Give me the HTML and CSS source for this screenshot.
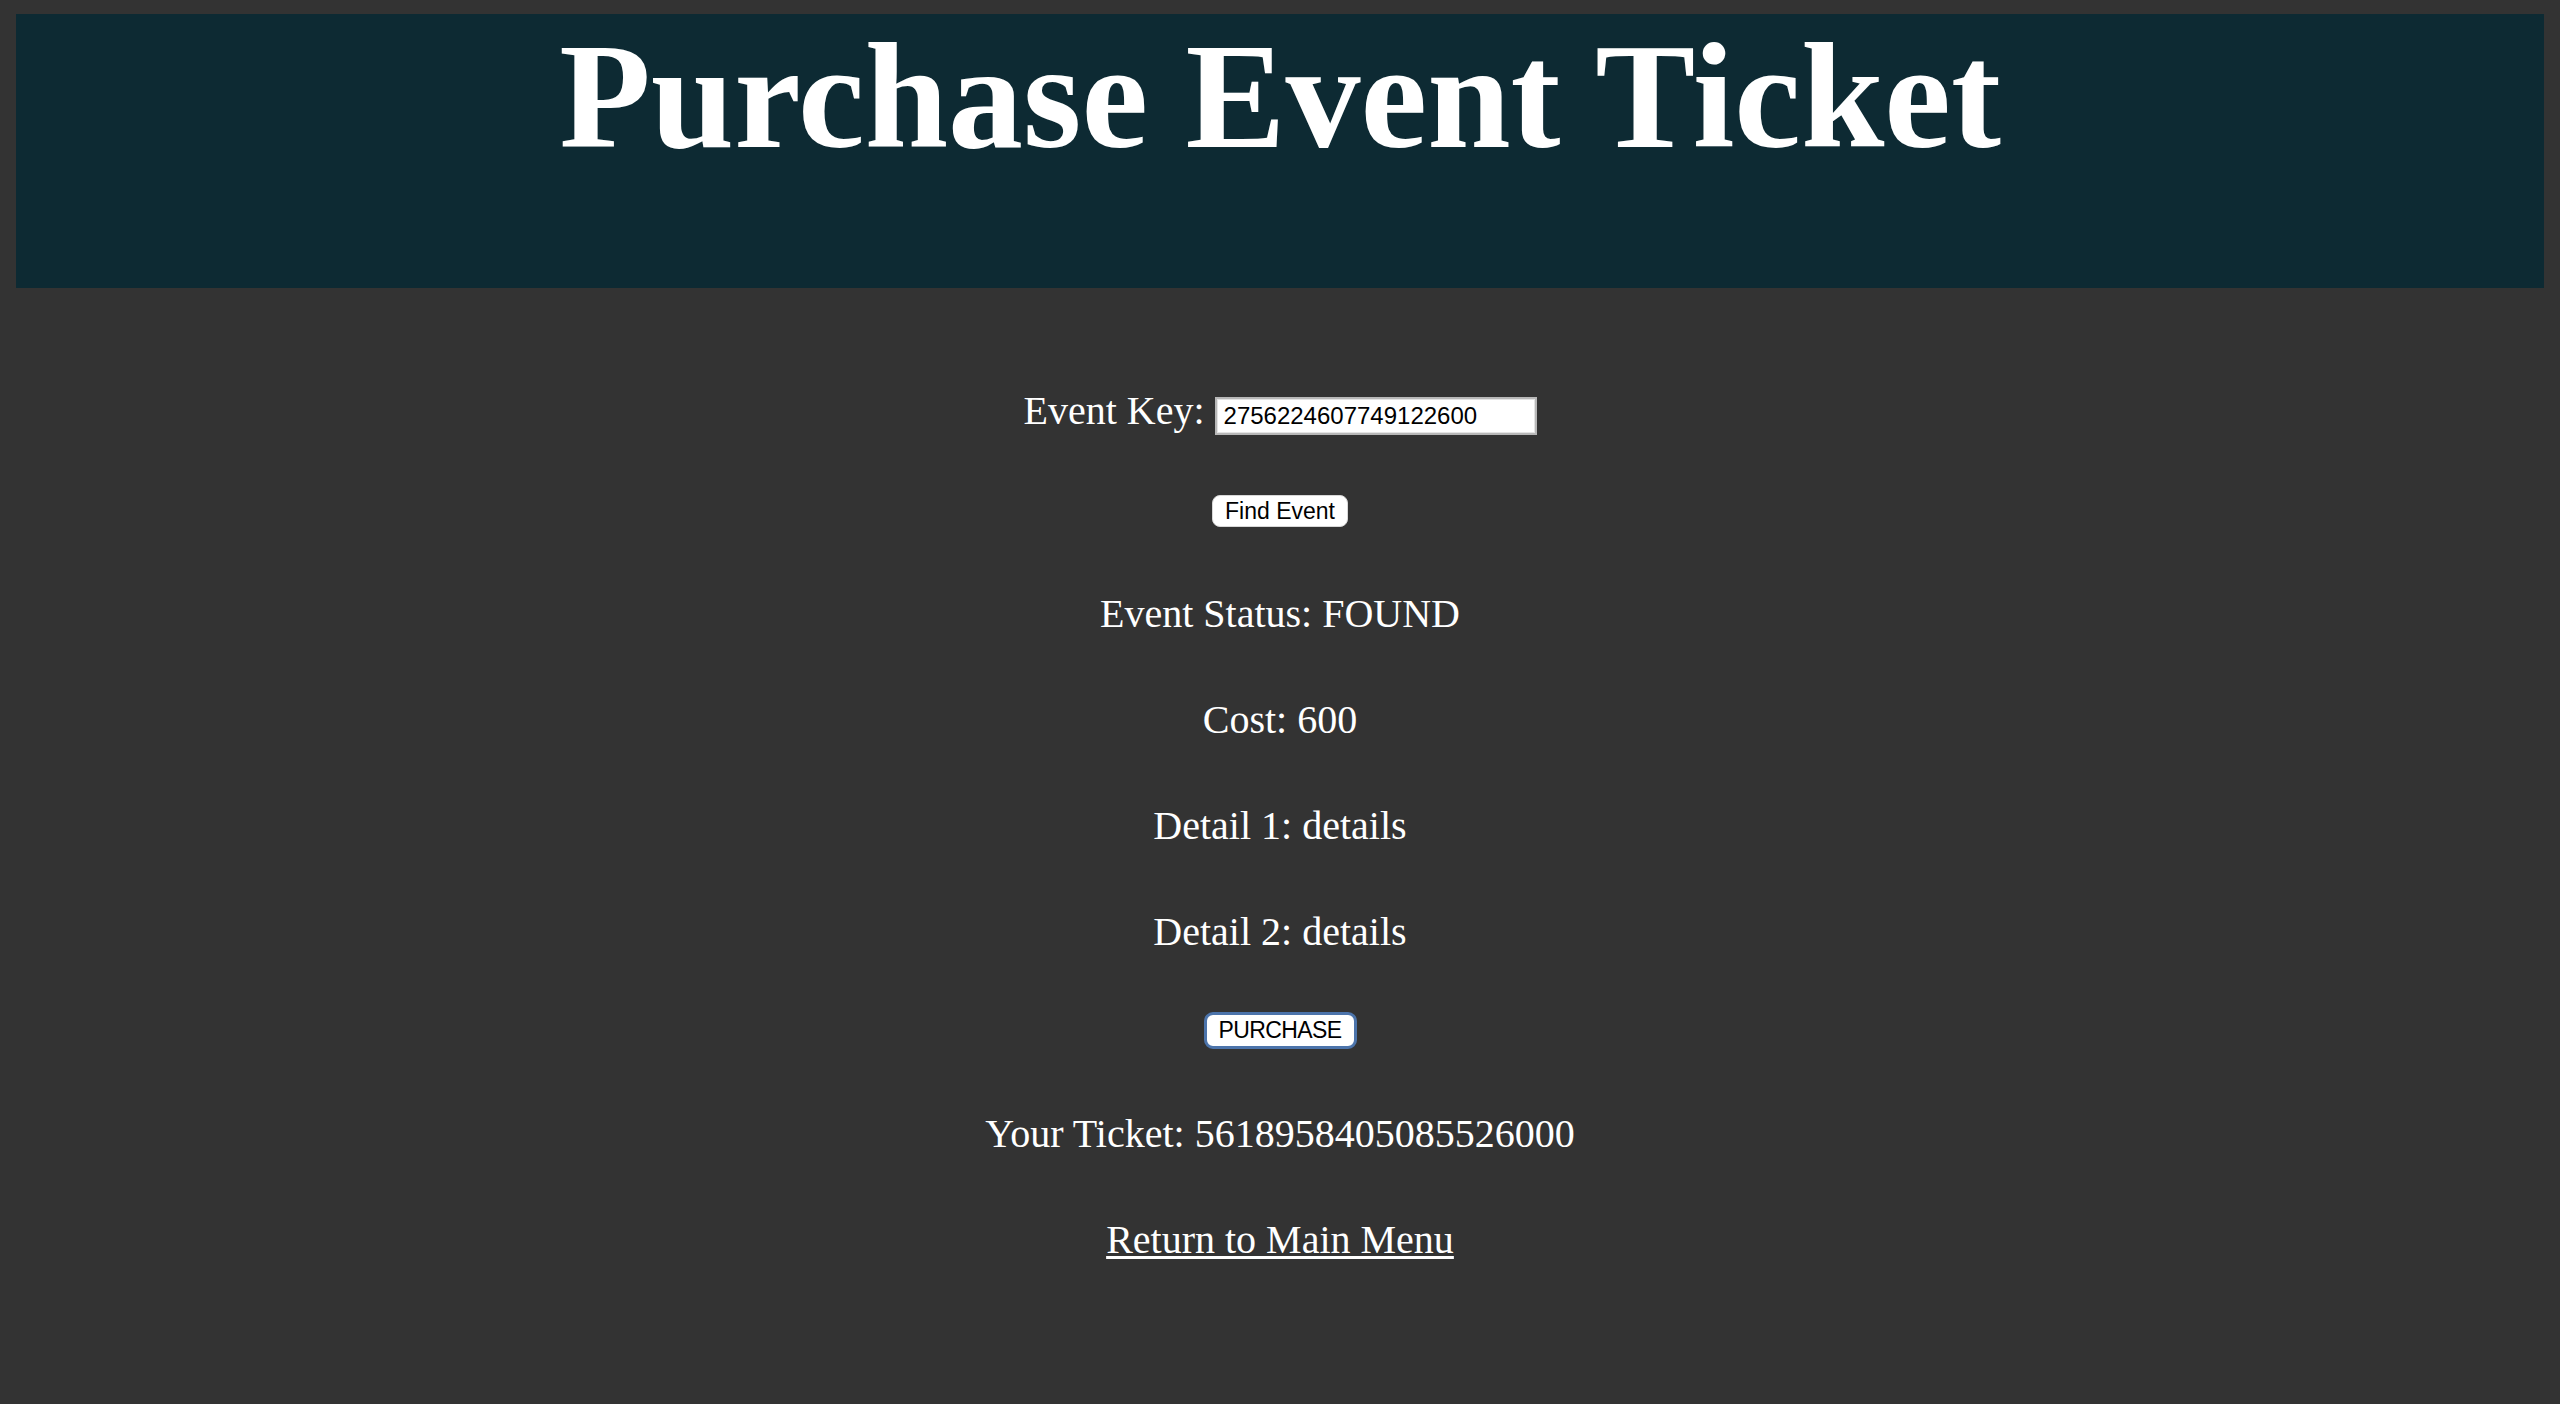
FILE: index.html
```html
<!DOCTYPE html>
<html lang="en">
<head>
<meta charset="utf-8">
<title>Purchase Event Ticket</title>
<link rel="stylesheet" href="styles.css">
</head>
<body>
<div class="header">
  <h1 class="title">Purchase Event Ticket</h1>
</div>
<div class="content">
  <div class="row row-key">Event Key: <input class="key-input" type="text" value="2756224607749122600"></div>
  <button class="btn btn-find" type="button">Find Event</button>
  <div class="row row-status">Event Status: FOUND</div>
  <div class="row">Cost: 600</div>
  <div class="row">Detail 1: details</div>
  <div class="row">Detail 2: details</div>
  <button class="btn btn-purchase" type="button">PURCHASE</button>
  <div class="row row-ticket">Your Ticket: 5618958405085526000</div>
  <div class="row"><a class="menu-link" href="#">Return to Main Menu</a></div>
</div>
</body>
</html>
```
FILE: styles.css
```css
html, body {
  background: #333333;
}
body {
  margin: 14px 16px 0 16px;
  font-family: "Liberation Serif", "Times New Roman", serif;
  color: #ffffff;
}
.header {
  background: #0d2a33;
  height: 274px;
  text-align: center;
}
.title {
  margin: 0;
  font-size: 150px;
  font-weight: bold;
  line-height: 164px;
  color: #ffffff;
}
.content {
  display: flex;
  flex-direction: column;
  align-items: center;
  padding-top: 100px;
}
.row {
  font-size: 40px;
  line-height: 46px;
  height: 46px;
  margin-top: 60px;
  white-space: nowrap;
}
.row-key {
  margin-top: 0;
}
.row-status {
  margin-top: 64px;
}
.row-ticket {
  margin-top: 62px;
}
.key-input {
  box-sizing: border-box;
  width: 322px;
  height: 38px;
  padding: 0 7px;
  border: 2px solid #b8b8b8;
  box-shadow: inset 0 0 0 1px #e4e4e4;
  background: #ffffff;
  color: #000000;
  font-family: "Liberation Sans", Arial, sans-serif;
  font-size: 24px;
  vertical-align: baseline;
  outline: none;
}
.btn {
  box-sizing: border-box;
  background: #ffffff;
  color: #000000;
  font-family: "Liberation Sans", Arial, sans-serif;
  font-size: 23px;
  border-radius: 8px;
  padding: 0;
  cursor: pointer;
}
.btn-find {
  width: 136px;
  height: 32px;
  margin-top: 61px;
  border: 1px solid #d8d8d8;
}
.btn-purchase {
  width: 153px;
  height: 37px;
  margin-top: 57px;
  border: 3px solid #4c74ab;
  border-radius: 9px;
  letter-spacing: -0.6px;
}
.menu-link {
  color: #ffffff;
  text-decoration: underline;
  text-decoration-thickness: 3px;
  text-underline-offset: 3px;
}
```
